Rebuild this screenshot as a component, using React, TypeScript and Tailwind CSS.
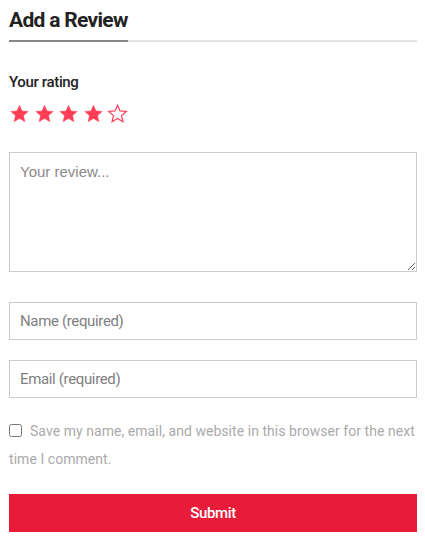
import { useState } from "react";

const STAR = "M12 2.5l2.9 6.6 7.1.6-5.4 4.7 1.6 7-6.2-3.7-6.2 3.7 1.6-7L2 9.7l7.1-.6z";

function Star({ filled }: { filled: boolean }) {
  return (
    <svg viewBox="0 0 24 24" className="h-[21px] w-[21px]">
      <path
        d={STAR}
        fill={filled ? "#ff3d55" : "none"}
        stroke="#ff3d55"
        strokeWidth={filled ? 0.5 : 1.4}
        strokeLinejoin="miter"
      />
    </svg>
  );
}

export default function App() {
  const [rating, setRating] = useState(4);

  return (
    <div className="bg-white px-[9px] pt-[8px] pr-[8px] font-['Roboto',sans-serif] tracking-[-0.35px]">
      <div className="border-b-2 border-[#e3e3e3]">
        <h3 className="-mb-[2px] inline-block border-b-2 border-[#888888] pb-[7px] text-[21px] font-bold leading-[25px] tracking-[-0.7px] text-[#222]">
          Add a Review
        </h3>
      </div>

      <p className="mt-[30px] text-[15px] font-medium leading-[20px] text-[#222]">Your rating</p>
      <div className="mt-[11px] flex gap-[3.5px]">
        {[1, 2, 3, 4, 5].map((n) => (
          <button key={n} type="button" onClick={() => setRating(n)} className="p-0">
            <Star filled={n <= rating} />
          </button>
        ))}
      </div>

      <textarea
        placeholder="Your review..."
        className="mt-[28px] block h-[120px] w-full resize-y border border-[#cccccc] px-[10px] py-[8px] font-['Liberation_Sans',sans-serif] text-[15px] tracking-normal text-[#333] outline-none placeholder:text-[#8a8a8a]"
      />

      <input
        placeholder="Name (required)"
        className="mt-[30px] block h-[38px] w-full border border-[#cccccc] px-[10px] text-[15px] text-[#333] outline-none placeholder:text-[#808080]"
      />
      <input
        placeholder="Email (required)"
        className="mt-[20px] block h-[38px] w-full border border-[#cccccc] px-[10px] text-[15px] text-[#333] outline-none placeholder:text-[#808080]"
      />

      <label className="mt-[19px] block text-[14px] leading-[28px] tracking-[0.05px] text-[#aaaaaa]">
        <input type="checkbox" className="mr-[8px] h-[13px] w-[13px] align-[-1px]" />
        Save my name, email, and website in this browser for the next time I comment.
      </label>

      <button
        type="button"
        className="mt-[21px] block h-[38px] w-full bg-[#e81c39] text-[15px] font-medium text-white"
      >
        Submit
      </button>
    </div>
  );
}
